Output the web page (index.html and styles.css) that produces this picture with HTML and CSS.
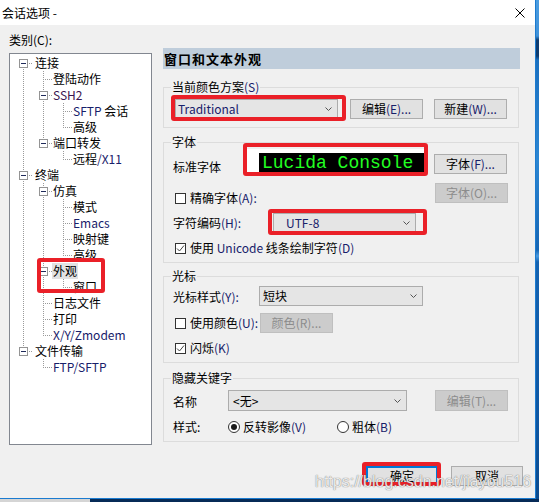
FILE: index.html
```html
<!DOCTYPE html>
<html lang="zh-CN">
<head>
<meta charset="utf-8">
<title>会话选项</title>
<link rel="stylesheet" href="styles.css">
</head>
<body>
<div class="screen">
  <div class="dialog">
    <div class="titlebar">
      <span class="title">会话选项 -</span>
      <svg class="close" width="10" height="10" viewBox="0 0 10 10"><path d="M0.5 0.5 9.5 9.5 M9.5 0.5 0.5 9.5" stroke="#000" stroke-width="1" fill="none"/></svg>
    </div>

    <div class="main">
      <div class="left">
        <div class="cat-label">类别<span class="en">(C):</span></div>
        <div class="tree">
          <div class="row"><span class="c tf"><i class="box"></i></span><span class="lbl l0">连接</span></div>
          <div class="row"><span class="c v"></span><span class="c t"></span><span class="lbl">登陆动作</span></div>
          <div class="row"><span class="c v"></span><span class="c t"><i class="box"></i></span><span class="lbl en ssh">SSH2</span></div>
          <div class="row"><span class="c v"></span><span class="c v"></span><span class="c t"></span><span class="lbl"><span class="en">SFTP</span> 会话</span></div>
          <div class="row"><span class="c v"></span><span class="c v"></span><span class="c l"></span><span class="lbl">高级</span></div>
          <div class="row"><span class="c v"></span><span class="c l"><i class="box"></i></span><span class="lbl">端口转发</span></div>
          <div class="row"><span class="c v"></span><span class="c b"></span><span class="c l"></span><span class="lbl">远程<span class="en">/X11</span></span></div>
          <div class="row"><span class="c t"><i class="box"></i></span><span class="lbl l0">终端</span></div>
          <div class="row"><span class="c v"></span><span class="c t"><i class="box"></i></span><span class="lbl">仿真</span></div>
          <div class="row"><span class="c v"></span><span class="c v"></span><span class="c t"></span><span class="lbl">模式</span></div>
          <div class="row"><span class="c v"></span><span class="c v"></span><span class="c t"></span><span class="lbl en">Emacs</span></div>
          <div class="row"><span class="c v"></span><span class="c v"></span><span class="c t"></span><span class="lbl">映射键</span></div>
          <div class="row"><span class="c v"></span><span class="c v"></span><span class="c l"></span><span class="lbl">高级</span></div>
          <div class="row sel"><span class="c v"></span><span class="c t"><i class="box"></i></span><span class="lbl picked">外观</span></div>
          <div class="row"><span class="c v"></span><span class="c v"></span><span class="c l"></span><span class="lbl">窗口</span></div>
          <div class="row"><span class="c v"></span><span class="c t"></span><span class="lbl">日志文件</span></div>
          <div class="row"><span class="c v"></span><span class="c t"></span><span class="lbl">打印</span></div>
          <div class="row"><span class="c v"></span><span class="c l"></span><span class="lbl en">X/Y/Zmodem</span></div>
          <div class="row"><span class="c l"><i class="box"></i></span><span class="lbl l0">文件传输</span></div>
          <div class="row"><span class="c b"></span><span class="c l"></span><span class="lbl en">FTP/SFTP</span></div>
        </div>
      </div>

      <div class="right">
        <div class="band">窗口和文本外观</div>

        <fieldset class="grp g1">
          <legend>当前颜色方案<span class="en">(S)</span></legend>
          <div class="frow scheme-row">
            <div class="combo scheme mk mk-scheme"><span class="en">Traditional</span><svg class="chev" width="7" height="4" viewBox="0 0 7 4"><path d="M0.5 0.5 3.5 3.5 6.5 0.5" stroke="#555" fill="none"/></svg></div>
            <div class="btn edit-btn">编辑<span class="en">(E)...</span></div>
            <div class="btn new-btn">新建<span class="en">(W)...</span></div>
          </div>
        </fieldset>

        <fieldset class="grp g2">
          <legend>字体</legend>
          <div class="frow font-row">
            <span class="flabel font-label">标准字体</span>
            <div class="preview mk mk-preview"><span class="ptext">Lucida Console</span></div>
            <div class="btn font-btn">字体<span class="en">(F)...</span></div>
          </div>
          <div class="frow exact-row">
            <label class="chk exact-chk"><span class="cb"></span><span>精确字体<span class="en">(A):</span></span></label>
            <div class="btn dis exact-btn">字体<span class="en">(O)...</span></div>
          </div>
          <div class="frow enc-row">
            <span class="flabel enc-label">字符编码<span class="en">(H):</span></span>
            <div class="combo enc mk mk-enc"><span class="en">UTF-8</span><svg class="chev" width="7" height="4" viewBox="0 0 7 4"><path d="M0.5 0.5 3.5 3.5 6.5 0.5" stroke="#555" fill="none"/></svg></div>
          </div>
          <div class="frow uni-row">
            <label class="chk"><span class="cb on"><svg width="9" height="9" viewBox="0 0 9 9"><path d="M1 4.5 3.5 7 8 1.5" stroke="#444" fill="none"/></svg></span><span>使用 <span class="en">Unicode</span> 线条绘制字符<span class="en">(D)</span></span></label>
          </div>
        </fieldset>

        <fieldset class="grp g3">
          <legend>光标</legend>
          <div class="frow cur-row">
            <span class="flabel cur-label">光标样式<span class="en">(Y):</span></span>
            <div class="combo cursor"><span>短块</span><svg class="chev" width="7" height="4" viewBox="0 0 7 4"><path d="M0.5 0.5 3.5 3.5 6.5 0.5" stroke="#555" fill="none"/></svg></div>
          </div>
          <div class="frow color-row">
            <label class="chk color-chk"><span class="cb"></span><span>使用颜色<span class="en">(U):</span></span></label>
            <div class="btn dis color-btn">颜色<span class="en">(R)...</span></div>
          </div>
          <div class="frow blink-row">
            <label class="chk"><span class="cb on"><svg width="9" height="9" viewBox="0 0 9 9"><path d="M1 4.5 3.5 7 8 1.5" stroke="#444" fill="none"/></svg></span><span>闪烁<span class="en">(K)</span></span></label>
          </div>
        </fieldset>

        <fieldset class="grp g4">
          <legend>隐藏关键字</legend>
          <div class="frow name-row">
            <span class="flabel name-label">名称</span>
            <div class="combo kw"><span>&lt;无&gt;</span><svg class="chev" width="7" height="4" viewBox="0 0 7 4"><path d="M0.5 0.5 3.5 3.5 6.5 0.5" stroke="#555" fill="none"/></svg></div>
            <div class="btn dis kw-btn">编辑<span class="en">(T)...</span></div>
          </div>
          <div class="frow style-row">
            <span class="flabel name-label">样式:</span>
            <label class="radio inv"><span class="rd on"></span><span>反转影像<span class="en">(V)</span></span></label>
            <label class="radio"><span class="rd"></span><span>粗体<span class="en">(B)</span></span></label>
          </div>
        </fieldset>
      </div>
    </div>

    <div class="footer">
      <div class="btn wide default mk mk-ok">确定</div>
      <div class="btn wide">取消</div>
    </div>

    <div class="watermark">https://blog.csdn.net/jiayou516</div>
  </div>
  <div class="desk"></div>
  <div class="taskbar"><div class="tb-apps"></div><div class="tb-rest"></div></div>
</div>
</body>
</html>
```

FILE: styles.css
```css
* { box-sizing: border-box; }

html, body {
  margin: 0;
  padding: 0;
}

body {
  width: 539px;
  height: 502px;
  overflow: hidden;
  font-family: "Noto Sans CJK SC", sans-serif;
  font-size: 12px;
  color: #000;
}

.screen {
  display: grid;
  grid-template-columns: 536px 3px;
  grid-template-rows: 499px 3px;
  width: 539px;
  height: 502px;
}

/* ---------- window frame ---------- */
.dialog {
  position: relative;
  display: flex;
  flex-direction: column;
  background: #f0f0f0;
  border-right: 1px solid #1a7bd0;
  border-bottom: 1px solid #1a7bd0;
}

.desk {
  grid-row: 1;
  grid-column: 2;
  background: linear-gradient(to bottom,
    #4c9de0 0, #3f91d8 36px, #0e3c70 40px, #0e3c70 56px, #1b6fbe 60px,
    #2c86d2 160px, #1766b3 250px, #4a9be0 256px, #1663b0 262px,
    #0f57a2 420px, #0c4a8c 499px);
}

.taskbar {
  grid-row: 2;
  grid-column: 1 / 3;
  display: flex;
}
.tb-apps { width: 90px; background: #d5d5d5; }
.tb-rest { flex: 1; background: #072b57; }

.titlebar {
  height: 25px;
  flex: none;
  display: flex;
  align-items: center;
  background: #fff;
  padding-left: 2px;
}
.title { line-height: 16px; }
.close { margin-left: auto; margin-right: 10px; }

.en { color: #17206a; }

/* ---------- body ---------- */
.main {
  display: flex;
  height: 420px;
  flex: none;
  padding-left: 9px;
}

.left {
  width: 143px;
  display: flex;
  flex-direction: column;
}
.cat-label {
  height: 28px;
  padding-top: 7px;
  line-height: 16px;
}
.cat-label .en { color: #000; }

/* ---------- category tree ---------- */
.tree {
  height: 392px;
  border: 1px solid #828790;
  background: #fff;
  padding: 1px 0 0 3px;
}
.row {
  display: flex;
  height: 16px;
}
.c {
  width: 20px;
  height: 16px;
  flex: none;
  display: flex;
  align-items: flex-start;
}
.c.v {
  background: repeating-linear-gradient(to bottom, #9a9a9a 0 1px, transparent 1px 2px) 10px 0 / 1px 100% no-repeat;
}
.c.t {
  background:
    repeating-linear-gradient(to bottom, #9a9a9a 0 1px, transparent 1px 2px) 10px 0 / 1px 100% no-repeat,
    repeating-linear-gradient(to right, #9a9a9a 0 1px, transparent 1px 2px) 10px 8px / 10px 1px no-repeat;
}
.c.l {
  background:
    repeating-linear-gradient(to bottom, #9a9a9a 0 1px, transparent 1px 2px) 10px 0 / 1px 9px no-repeat,
    repeating-linear-gradient(to right, #9a9a9a 0 1px, transparent 1px 2px) 10px 8px / 10px 1px no-repeat;
}
.c.tf {
  background:
    repeating-linear-gradient(to bottom, #9a9a9a 0 1px, transparent 1px 2px) 10px 8px / 1px 8px no-repeat,
    repeating-linear-gradient(to right, #9a9a9a 0 1px, transparent 1px 2px) 10px 8px / 10px 1px no-repeat;
}
.box {
  display: block;
  width: 9px;
  height: 9px;
  margin: 4px 0 0 6px;
  border: 1px solid #949494;
  background: #fff linear-gradient(#1e2a5a, #1e2a5a) center / 5px 1px no-repeat;
}
.lbl {
  line-height: 16px;
  white-space: nowrap;
}
.lbl.l0 { margin-left: 2px; }
.lbl.ssh { color: #3a1550; }
.lbl.picked {
  background: #e2e2e2;
  padding: 0 1px;
  margin-left: -1px;
}
.row.sel { position: relative; }
.row.sel::after {
  content: "";
  position: absolute;
  left: 24px;
  top: -5px;
  width: 60px;
  height: 27px;
  border: 4px solid #ea2028;
  border-radius: 3px;
}

/* ---------- settings pane ---------- */
.right {
  width: 357px;
  margin-left: 11px;
  display: flex;
  flex-direction: column;
}
.band {
  margin-top: 23px;
  height: 21px;
  line-height: 21px;
  background: #bfcddb;
  font-weight: bold;
  font-size: 13px;
  letter-spacing: 1px;
  padding-left: 1px;
}

.grp {
  margin: 0;
  width: 356px;
  min-width: 0;
  border: 1px solid #dcdcdc;
  padding: 0 10px 0 9px;
}
.grp legend {
  padding: 0 1px;
  margin-left: -2px;
  line-height: 14px;
}
.g1 { margin-top: 11px; padding-bottom: 8px; }
.g2 { margin-top: 7px; padding-bottom: 6px; }
.g3 { margin-top: 6px; padding-bottom: 6px; }
.g4 { margin-top: 8px; padding-bottom: 6px; }

.frow {
  display: flex;
  align-items: flex-start;
}
.flabel {
  line-height: 16px;
  white-space: nowrap;
  flex: none;
}

/* controls */
.btn {
  width: 73px;
  height: 20px;
  flex: none;
  display: flex;
  align-items: center;
  justify-content: center;
  border: 1px solid #adadad;
  background: #e1e1e1;
  line-height: 16px;
  white-space: nowrap;
}
.btn.dis {
  background: #cccccc;
  border-color: #bfbfbf;
  color: #8c8c8c;
}
.btn.dis .en { color: #8c8c8c; }

.combo {
  height: 20px;
  flex: none;
  display: flex;
  align-items: center;
  justify-content: space-between;
  border: 1px solid #acacac;
  background: #e5e5e5;
  padding: 0 5px 0 2px;
  line-height: 16px;
}
.chev { flex: none; }

.chk {
  display: flex;
  align-items: center;
  gap: 4px;
  line-height: 16px;
  margin-left: 2px;
  white-space: nowrap;
}
.cb {
  width: 11px;
  height: 11px;
  flex: none;
  display: flex;
  align-items: center;
  justify-content: center;
  border: 1px solid #333;
  background: #fff;
}

.radio {
  display: flex;
  align-items: center;
  gap: 3px;
  line-height: 16px;
  white-space: nowrap;
}
.rd {
  width: 12px;
  height: 12px;
  flex: none;
  display: flex;
  align-items: center;
  justify-content: center;
  border: 1px solid #333;
  border-radius: 50%;
  background: #fff;
}
.rd.on::before {
  content: "";
  width: 6px;
  height: 6px;
  border-radius: 50%;
  background: #1a1a1a;
}

/* red callouts drawn over controls */
.mk { position: relative; }
.mk::after {
  content: "";
  position: absolute;
  z-index: 2;
  border: 4px solid #ea2028;
  border-radius: 3px;
}
.mk-scheme::after { top: -5px; left: -5px; right: -9px; bottom: -3px; }
.mk-preview::after { top: -6px; left: -4px; right: -3px; bottom: -3px; }
.mk-enc::after { top: -5px; left: -6px; right: -12px; bottom: -3px; }
.mk-ok::after { top: -5px; left: -5px; right: -4px; bottom: -1px; }

/* colour scheme group */
.scheme-row { height: 25px; align-items: flex-end; }
.scheme { width: 163px; margin-left: 2px; }
.edit-btn { margin-left: 12px; }
.new-btn { margin-left: 11px; }

/* font group */
.font-row { height: 29px; }
.font-label { width: 74px; margin-top: 10px; }
.preview {
  width: 178px;
  height: 24px;
  flex: none;
  background: #fff;
  padding: 4px 0 0 12px;
}
.ptext {
  display: block;
  height: 20px;
  background: #000;
  color: #22ff22;
  font-family: "Liberation Mono", monospace;
  font-size: 18px;
  line-height: 20px;
  padding-left: 3px;
  white-space: nowrap;
  overflow: hidden;
}
.font-btn { margin-left: 9px; margin-top: 5px; }

.exact-row { height: 28px; }
.exact-chk { margin-top: 12px; }
.exact-btn { margin-left: auto; margin-top: 5px; }

.enc-row { height: 30px; }
.enc-label { width: 100px; margin-top: 9px; }
.enc { width: 143px; margin-top: 7px; padding-left: 12px; }

.uni-row { height: 20px; }
.uni-row .chk { margin-top: 4px; }

/* cursor group */
.cur-row { height: 26px; }
.cur-label { width: 86px; margin-top: 6px; }
.cursor { width: 164px; margin-top: 3px; padding-left: 3px; }

.color-row { height: 27px; }
.color-chk { width: 85px; margin-top: 6px; }
.color-btn { margin-top: 4px; }

.blink-row { height: 20px; }
.blink-row .chk { margin-top: 4px; }

/* hidden keyword group */
.name-row { height: 27px; }
.name-label { width: 55px; margin-top: 9px; }
.kw { width: 179px; margin-top: 5px; height: 21px; padding-left: 4px; }
.kw-btn { margin-left: auto; margin-top: 5px; height: 21px; }

.style-row { height: 23px; }
.style-row .name-label { margin-top: 7px; }
.style-row .radio { margin-top: 7px; }
.radio.inv { width: 109px; }

/* dialog buttons */
.footer {
  display: flex;
  justify-content: flex-end;
  gap: 13px;
  padding-right: 12px;
  margin-top: 21px;
}
.btn.wide { width: 72px; }
.btn.default {
  border-color: #0078d7;
  box-shadow: inset 0 0 0 1px #0078d7;
}

/* site stamp laid over the lower right corner */
.watermark {
  position: absolute;
  z-index: 3;
  left: 315px;
  top: 473px;
  font-family: "Liberation Sans", sans-serif;
  font-size: 16px;
  line-height: 18px;
  color: rgba(255, 255, 255, 0.85);
  text-shadow:
    0 0 1px rgba(90, 90, 90, 0.6),
    0 0 1px rgba(90, 90, 90, 0.6);
  white-space: nowrap;
}
```
